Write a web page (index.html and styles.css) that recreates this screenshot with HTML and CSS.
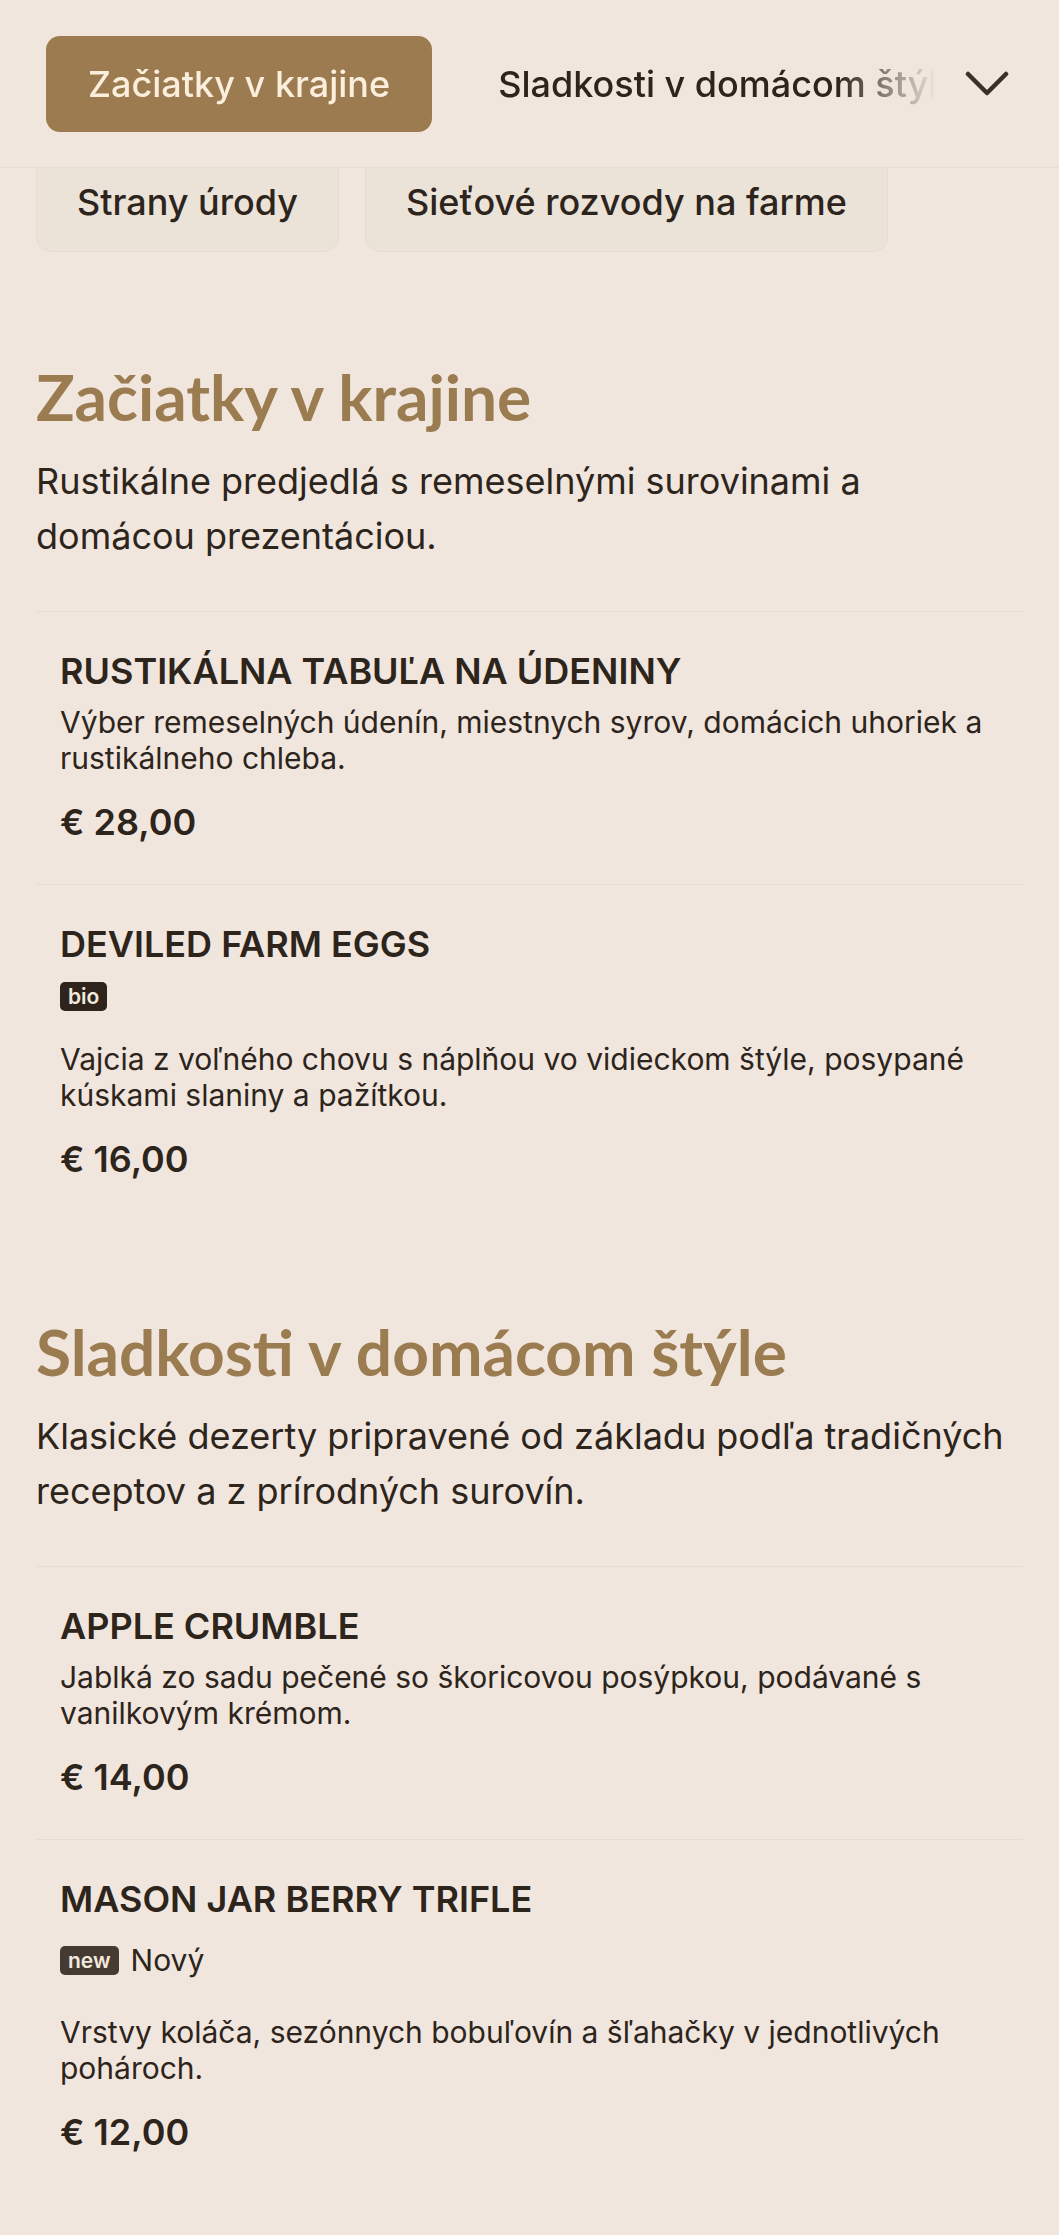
FILE: index.html
```html
<!DOCTYPE html>
<html lang="sk">
<head>
<meta charset="utf-8">
<title>Menu</title>
<link rel="stylesheet" href="styles.css">
</head>
<body>
<header class="topbar">
  <nav class="tabs">
    <button class="tab tab-active">Začiatky v krajine</button>
    <button class="tab">Sladkosti v domácom štýle</button>
  </nav>
  <button class="expand" aria-label="Rozbaliť">
    <svg width="44" height="26" viewBox="0 0 44 26"><polyline points="3,3 22,22 41,3" fill="none" stroke="#3a3028" stroke-width="4.5" stroke-linecap="round" stroke-linejoin="round"/></svg>
  </button>
</header>

<div class="chips">
  <span class="chip">Strany úrody</span>
  <span class="chip">Sieťové rozvody na farme</span>
</div>

<main class="menu">
  <section class="section">
    <h2 class="section-title">Začiatky v krajine</h2>
    <p class="section-desc">Rustikálne predjedlá s remeselnými surovinami a domácou prezentáciou.</p>
    <div class="items">
      <article class="item">
        <h3 class="item-title">RUSTIKÁLNA TABUĽA NA ÚDENINY</h3>
        <p class="item-desc">Výber remeselných údenín, miestnych syrov, domácich uhoriek a rustikálneho chleba.</p>
        <div class="price">€ 28,00</div>
      </article>
      <article class="item">
        <h3 class="item-title">DEVILED FARM EGGS</h3>
        <div class="tags"><span class="badge">bio</span></div>
        <p class="item-desc">Vajcia z voľného chovu s náplňou vo vidieckom štýle, posypané kúskami slaniny a pažítkou.</p>
        <div class="price">€ 16,00</div>
      </article>
    </div>
  </section>

  <section class="section">
    <h2 class="section-title">Sladkosti v domácom štýle</h2>
    <p class="section-desc">Klasické dezerty pripravené od základu podľa tradičných receptov a z prírodných surovín.</p>
    <div class="items">
      <article class="item">
        <h3 class="item-title">APPLE CRUMBLE</h3>
        <p class="item-desc">Jablká zo sadu pečené so škoricovou posýpkou, podávané s vanilkovým krémom.</p>
        <div class="price">€ 14,00</div>
      </article>
      <article class="item">
        <h3 class="item-title">MASON JAR BERRY TRIFLE</h3>
        <div class="tags"><span class="badge badge-new">new</span><span class="tag-label">Nový</span></div>
        <p class="item-desc">Vrstvy koláča, sezónnych bobuľovín a šľahačky v jednotlivých pohároch.</p>
        <div class="price">€ 12,00</div>
      </article>
    </div>
  </section>
</main>
</body>
</html>
```

FILE: styles.css
```css
html, body {
  margin: 0;
  padding: 0;
  background: #f0e6dd;
}
body {
  font-family: Inter, "Noto Sans", sans-serif;
  color: #2d241c;
}

.topbar {
  display: flex;
  align-items: center;
  padding: 36px 0 35px 46px;
  border-bottom: 1px solid #e7ddd3;
  background: #f0e6dd;
}
.tabs {
  flex: 1;
  min-width: 0;
  display: flex;
  gap: 24px;
  overflow: hidden;
  white-space: nowrap;
  -webkit-mask-image: linear-gradient(to right, #000 calc(100% - 95px), rgba(0,0,0,0.05));
  mask-image: linear-gradient(to right, #000 calc(100% - 95px), rgba(0,0,0,0.05));
}
.tab {
  flex: none;
  height: 96px;
  padding: 0 42px;
  border: 0;
  border-radius: 14px;
  background: transparent;
  font-family: Inter, sans-serif;
  font-size: 36px;
  font-weight: 500;
  color: #2d241c;
}
.tab-active {
  background: #9b7b4f;
  color: #fbeedc;
}
.expand {
  flex: none;
  margin: 0 50px 0 32px;
  padding: 0;
  border: 0;
  background: transparent;
  display: flex;
  width: 44px;
  height: 26px;
}

.chips {
  display: flex;
  gap: 26px;
  padding: 0 36px;
  margin-bottom: 14px;
}
.chip {
  padding: 16px 40px 31px 40px;
  font-size: 36px;
  line-height: 36px;
  font-weight: 500;
  background: #ebe2d8;
  border: 1px solid #e6dcd1;
  border-top: 0;
  border-radius: 0 0 15px 15px;
}

.menu {
  padding: 0 36px 40px;
}
.section {
  padding-top: 92px;
}
.section-title {
  margin: 0 0 19px;
  font-family: Lato, sans-serif;
  font-size: 64px;
  line-height: 77px;
  font-weight: 700;
  color: #9b7b50;
}
.section-desc {
  max-width: 975px;
  margin: 0 0 47px;
  font-size: 36px;
  line-height: 55px;
}
.item {
  border-top: 1px solid #e6dbd0;
  padding: 39px 24px 41px;
}
.item-title {
  margin: 0 0 12px;
  font-size: 36px;
  line-height: 41px;
  font-weight: 600;
}
.item-desc {
  margin: 0;
  font-size: 30px;
  line-height: 36px;
}
.price {
  margin-top: 26px;
  font-size: 36px;
  line-height: 41px;
  font-weight: 600;
}
.tags {
  display: flex;
  align-items: center;
  gap: 12px;
  min-height: 29px;
  margin: 17px 0 30px;
}
.badge {
  display: inline-block;
  padding: 0 8px;
  height: 29px;
  line-height: 29px;
  border-radius: 5px;
  background: #2e241c;
  color: #f3e9df;
  font-size: 21px;
  font-weight: 600;
}
.badge-new {
  background: #463b32;
}
.tag-label {
  font-size: 30px;
  line-height: 47px;
}
```
